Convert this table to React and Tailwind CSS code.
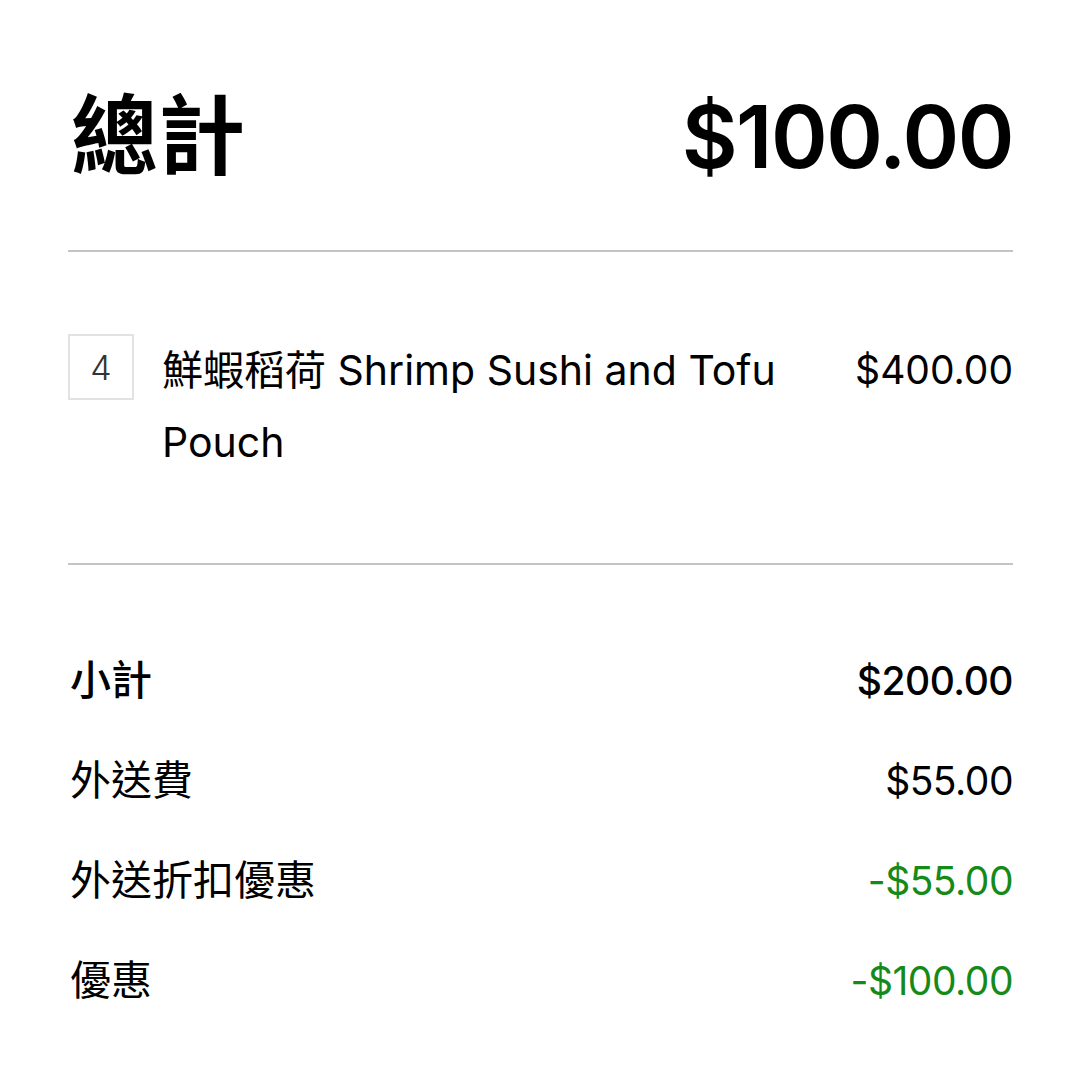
const font = { fontFamily: '"Inter", "Noto Sans CJK TC", sans-serif' };

const rows = [
  { label: "小計", value: "$200.00", strong: true },
  { label: "外送費", value: "$55.00" },
  { label: "外送折扣優惠", value: "-$55.00", green: true },
  { label: "優惠", value: "-$100.00", green: true },
];

export default function App() {
  return (
    <div className="min-h-screen bg-white pl-[68px] pr-[67px] text-black" style={font}>
      {/* Total */}
      <div className="flex items-center justify-between pt-[92px] pb-[68px]">
        <h1 className="ml-[3px] text-[87px] leading-[90px] font-semibold">總計</h1>
        <span className="text-[86px] leading-[90px] font-semibold tracking-[-1.5px]">$100.00</span>
      </div>
      <div className="h-[2px] bg-[#c4c4c4]" />

      {/* Item */}
      <div className="flex items-start pt-[82px] pb-[85px]">
        <div className="flex h-[66px] w-[66px] shrink-0 items-center justify-center border-2 border-[#e2e2e2] text-[34px] font-light text-[#333]">
          4
        </div>
        <div className="ml-[28px] w-[630px] text-[41px] leading-[72px]">
          鮮蝦稻荷 Shrimp Sushi and Tofu Pouch
        </div>
        <div className="ml-auto text-[39px] leading-[72px]">$400.00</div>
      </div>
      <div className="h-[2px] bg-[#c4c4c4]" />

      {/* Summary */}
      <div className="pt-[66px]">
        {rows.map((r) => (
          <div key={r.label} className="flex h-[100px] items-center justify-between">
            <span className={"ml-[2px] text-[41px] " + (r.strong ? "font-medium" : "")}>{r.label}</span>
            <span
              className={
                "text-[39px] tracking-[-0.5px] " +
                (r.strong ? "font-medium " : "") +
                (r.green ? "text-[#168a19]" : "")
              }
            >
              {r.value}
            </span>
          </div>
        ))}
      </div>
    </div>
  );
}
